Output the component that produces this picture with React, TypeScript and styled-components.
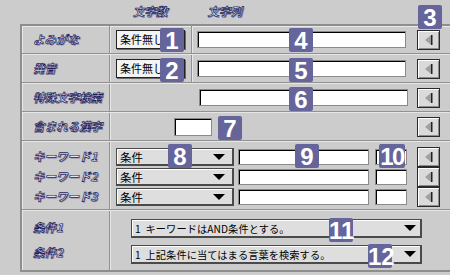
import React from 'react';
import styled, { createGlobalStyle } from 'styled-components';

const GlobalStyle = createGlobalStyle`
  html, body {
    margin: 0;
    padding: 0;
    background: #cccccc;
  }
`;

const Page = styled.div`
  position: relative;
  width: 450px;
  height: 275px;
  overflow: hidden;
  background: #cccccc;
  font-family: "Noto Sans CJK JP", "Liberation Sans", sans-serif;
  color: #000;
`;

const HeaderRow = styled.div`
  display: flex;
  align-items: center;
  gap: 40px;
  height: 24px;
  padding-left: 133px;
  box-sizing: border-box;
`;

const Caption = styled.span`
  font-size: 11.5px;
  font-weight: 700;
  font-style: italic;
  color: #e4e4f0;
  -webkit-text-stroke: 0.7px #1e1e5c;
  text-shadow: 1px 1px 0 #8888aa;
  line-height: 1;
  white-space: nowrap;
`;

const Frame = styled.div`
  margin-left: 20px;
  width: 440px;
  border: 2px solid #8e8e8e;
  border-right: none;
  box-shadow: inset 1px 1px 0 #e8e8e8;
`;

const Row = styled.div<{ $h: number; $last?: boolean }>`
  display: grid;
  grid-template-columns: 89px 306px 23px;
  height: ${({ $h }) => $h}px;
  box-sizing: border-box;
  border-bottom: ${({ $last }) => ($last ? 'none' : '2px groove #e6e6e6')};
`;

const LabelCell = styled.div<{ $top?: number; $gap?: number }>`
  display: flex;
  flex-direction: column;
  justify-content: ${({ $top }) => ($top === undefined ? 'center' : 'flex-start')};
  gap: ${({ $gap }) => $gap ?? 0}px;
  padding-left: 11px;
  padding-top: ${({ $top }) => $top ?? 0}px;
  border-right: 2px groove #e6e6e6;
`;

const LabelLine = styled.div<{ $h?: number }>`
  display: flex;
  align-items: center;
  height: ${({ $h }) => $h ?? 20}px;
`;

const Main = styled.div<{ $pad?: number; $span?: boolean }>`
  display: flex;
  align-items: center;
  padding-left: ${({ $pad }) => $pad ?? 0}px;
  grid-column: ${({ $span }) => ($span ? '2 / 4' : 'auto')};
`;

const CountCell = styled.div`
  display: flex;
  align-items: center;
  align-self: stretch;
  width: 82px;
  padding-left: 5px;
  box-sizing: border-box;
  border-right: 2px groove #e6e6e6;
`;

const Spacer = styled.div`
  width: 84px;
`;

const PlainButton = styled.div`
  width: 69px;
  height: 19px;
  box-sizing: border-box;
  background: #f4f4f4;
  border: 1px solid #222;
  box-shadow: 1px 1px 0 #6a6a6a;
  font-size: 11px;
  line-height: 17px;
  padding-left: 3px;
  white-space: nowrap;
  overflow: hidden;
`;

const TextBox = styled.div<{ $w: number; $h?: number; $ml?: number }>`
  width: ${({ $w }) => $w}px;
  height: ${({ $h }) => $h ?? 17}px;
  margin-left: ${({ $ml }) => $ml ?? 0}px;
  box-sizing: border-box;
  background: #ffffff;
  border: 1px solid #8a8a8a;
  box-shadow: inset 1px 1px 0 #000;
  flex-shrink: 0;
`;

const ArrowCol = styled.div<{ $top?: number }>`
  display: flex;
  flex-direction: column;
  justify-content: ${({ $top }) => ($top === undefined ? 'center' : 'flex-start')};
  padding-top: ${({ $top }) => $top ?? 0}px;
`;

const ArrowButton = styled.div`
  width: 23px;
  height: 20px;
  box-sizing: border-box;
  display: flex;
  align-items: center;
  justify-content: center;
  background: #dadada;
  border: 1px solid #2a2a2a;
  box-shadow: inset 1px 1px 0 #ffffff, inset -1px -1px 0 #8c8c8c;
`;

const Stack = styled.div<{ $top: number; $gap?: number }>`
  display: flex;
  flex-direction: column;
  gap: ${({ $gap }) => $gap ?? 0}px;
  padding-top: ${({ $top }) => $top}px;
  align-self: stretch;
`;

const Line = styled.div`
  display: flex;
  align-items: center;
  height: 20px;
`;

const Select = styled.div<{ $w: number; $h?: number; $ml?: number; $small?: boolean }>`
  position: relative;
  width: ${({ $w }) => $w}px;
  height: ${({ $h }) => $h ?? 18}px;
  margin-left: ${({ $ml }) => $ml ?? 0}px;
  box-sizing: border-box;
  background: #dedede;
  border: 1px solid #4a4a4a;
  border-right-width: 2px;
  border-bottom-width: 2px;
  box-shadow: inset 1px 1px 0 #ffffff;
  font-size: ${({ $small }) => ($small ? '10.2px' : '11.5px')};
  letter-spacing: ${({ $small }) => ($small ? '0.1px' : '0')};
  padding-left: 3px;
  display: flex;
  align-items: center;
  white-space: pre;
  flex-shrink: 0;
`;

const Caret = styled.span<{ $right?: number }>`
  position: absolute;
  right: ${({ $right }) => $right ?? 7}px;
  top: 50%;
  margin-top: -3px;
  width: 0;
  height: 0;
  border-left: 6px solid transparent;
  border-right: 6px solid transparent;
  border-top: 6px solid #000;
`;

const Badge = styled.div<{ $x: number; $y: number; $w?: number }>`
  position: absolute;
  left: ${({ $x }) => $x}px;
  top: ${({ $y }) => $y}px;
  width: ${({ $w }) => $w ?? 24}px;
  height: 24px;
  border-radius: 2px;
  background: #65659b;
  color: #ffffff;
  font-family: "Liberation Sans", Arial, sans-serif;
  font-weight: 700;
  font-size: 24px;
  line-height: 25px;
  letter-spacing: ${({ $w }) => ($w ? '-1.5px' : '0')};
  text-align: center;
`;

const LeftArrow = () => (
  <svg width="10" height="12" viewBox="0 0 10 12">
    <polygon points="1,6 7,1 7,11" fill="#a0a0a0" />
    <rect x="7" y="1" width="1.5" height="10" fill="#222" />
  </svg>
);

const Arrow = () => (
  <ArrowButton>
    <LeftArrow />
  </ArrowButton>
);

const keywords = ['キーワード1', 'キーワード2', 'キーワード3'];

const badges = [
  { n: '1', x: 160, y: 28 },
  { n: '2', x: 160, y: 58 },
  { n: '3', x: 418, y: 5 },
  { n: '4', x: 289, y: 28 },
  { n: '5', x: 289, y: 58 },
  { n: '6', x: 289, y: 87 },
  { n: '7', x: 218, y: 116 },
  { n: '8', x: 168, y: 144 },
  { n: '9', x: 295, y: 144 },
  { n: '10', x: 379, y: 144, w: 26 },
  { n: '11', x: 329, y: 218 },
  { n: '12', x: 368, y: 244 },
];

export default function App() {
  return (
    <Page>
      <GlobalStyle />
      <HeaderRow>
        <Caption>文字数</Caption>
        <Caption>文字列</Caption>
      </HeaderRow>
      <Frame>
        <Row $h={29}>
          <LabelCell>
            <Caption>よみがな</Caption>
          </LabelCell>
          <Main>
            <CountCell>
              <PlainButton>条件無し</PlainButton>
            </CountCell>
            <TextBox $w={209} $ml={4} />
          </Main>
          <ArrowCol>
            <Arrow />
          </ArrowCol>
        </Row>
        <Row $h={29}>
          <LabelCell>
            <Caption>発音</Caption>
          </LabelCell>
          <Main>
            <CountCell>
              <PlainButton>条件無し</PlainButton>
            </CountCell>
            <TextBox $w={209} $ml={4} />
          </Main>
          <ArrowCol>
            <Arrow />
          </ArrowCol>
        </Row>
        <Row $h={29}>
          <LabelCell>
            <Caption>特殊文字検索</Caption>
          </LabelCell>
          <Main>
            <Spacer />
            <TextBox $w={209} $ml={4} />
          </Main>
          <ArrowCol>
            <Arrow />
          </ArrowCol>
        </Row>
        <Row $h={29}>
          <LabelCell>
            <Caption>含まれる漢字</Caption>
          </LabelCell>
          <Main $pad={63}>
            <TextBox $w={38} $h={18} />
          </Main>
          <ArrowCol>
            <Arrow />
          </ArrowCol>
        </Row>
        <Row $h={69}>
          <LabelCell $top={5}>
            {keywords.map((k) => (
              <LabelLine key={k}>
                <Caption>{k}</Caption>
              </LabelLine>
            ))}
          </LabelCell>
          <Stack $top={5}>
            {keywords.map((k) => (
              <Line key={k}>
                <Select $w={118} $ml={5}>
                  条件
                  <Caret />
                </Select>
                <TextBox $w={131} $h={16} $ml={4} />
                <TextBox $w={32} $h={16} $ml={6} />
              </Line>
            ))}
          </Stack>
          <ArrowCol $top={5}>
            {keywords.map((k) => (
              <Arrow key={k} />
            ))}
          </ArrowCol>
        </Row>
        <Row $h={59} $last>
          <LabelCell $top={7} $gap={6}>
            <LabelLine $h={19}>
              <Caption>条件1</Caption>
            </LabelLine>
            <LabelLine $h={19}>
              <Caption>条件2</Caption>
            </LabelLine>
          </LabelCell>
          <Main $span>
            <Stack $top={8} $gap={7}>
              <Select $w={291} $h={19} $ml={20} $small>
                {'1  キーワードはAND条件とする。'}
                <Caret $right={4} />
              </Select>
              <Select $w={291} $h={19} $ml={20} $small>
                {'1  上記条件に当てはまる言葉を検索する。'}
                <Caret $right={4} />
              </Select>
            </Stack>
          </Main>
        </Row>
      </Frame>
      {badges.map((b) => (
        <Badge key={b.n} $x={b.x} $y={b.y} $w={b.w}>
          {b.n}
        </Badge>
      ))}
    </Page>
  );
}
